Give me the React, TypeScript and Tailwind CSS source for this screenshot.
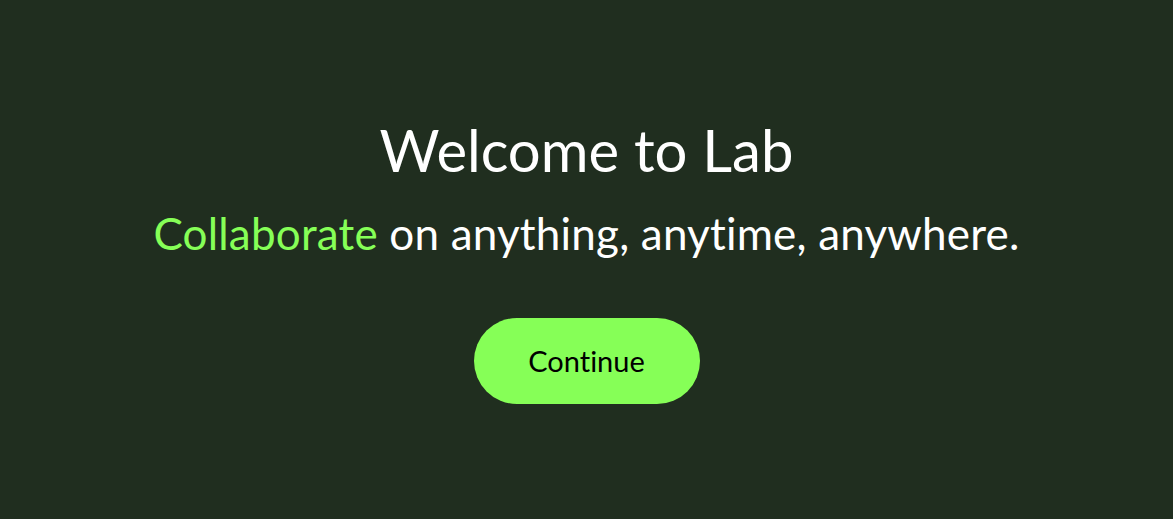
export default function App() {
  return (
    <main
      className="min-h-screen w-full bg-[#202e1f] flex flex-col items-center pt-[121px] px-6 [font-variant-ligatures:none]"
      style={{ fontFamily: '"Lato", "Noto Sans", sans-serif' }}
    >
      <div className="flex flex-col items-center text-center">
        <h1 className="text-[58px] leading-none font-normal text-white">
          Welcome to Lab
        </h1>
        <p className="mt-[32px] text-[44px] leading-none tracking-[0.2px] text-white">
          <span className="text-[#86ff57]">Collaborate</span> on anything, anytime, anywhere.
        </p>
        <button className="mt-[63px] w-[226px] h-[86px] rounded-full bg-[#86ff57] text-black text-[29px]">
          Continue
        </button>
      </div>
    </main>
  );
}
